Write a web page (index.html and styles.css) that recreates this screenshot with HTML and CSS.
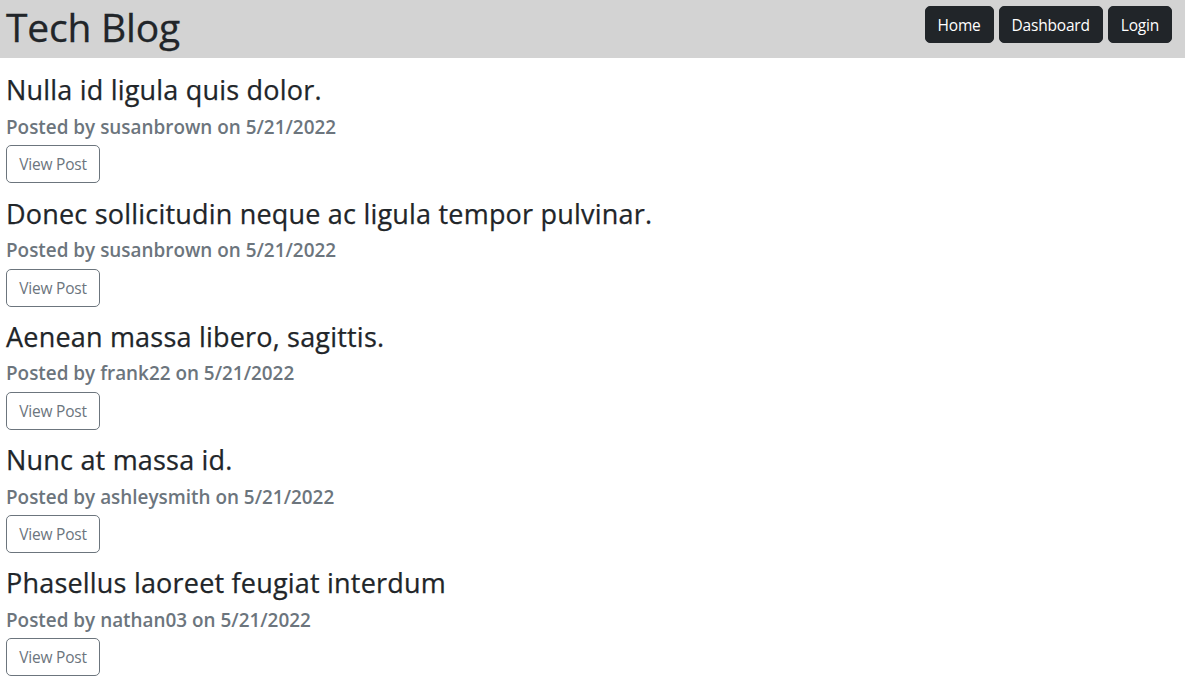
FILE: index.html
```html
<!DOCTYPE html>
<html lang="en">
<head>
<meta charset="utf-8">
<title>Tech Blog</title>
<link rel="stylesheet" href="styles.css">
</head>
<body>
<header class="topbar">
  <h1 class="brand">Tech Blog</h1>
  <nav class="nav">
    <a class="btn btn-dark" href="#">Home</a>
    <a class="btn btn-dark" href="#">Dashboard</a>
    <a class="btn btn-dark" href="#">Login</a>
  </nav>
</header>
<main class="posts">
  <article class="post">
    <h2 class="post-title">Nulla id ligula quis dolor.</h2>
    <h5 class="post-meta">Posted by susanbrown on 5/21/2022</h5>
    <a class="btn btn-outline" href="#">View Post</a>
  </article>
  <article class="post">
    <h2 class="post-title">Donec sollicitudin neque ac ligula tempor pulvinar.</h2>
    <h5 class="post-meta">Posted by susanbrown on 5/21/2022</h5>
    <a class="btn btn-outline" href="#">View Post</a>
  </article>
  <article class="post">
    <h2 class="post-title">Aenean massa libero, sagittis.</h2>
    <h5 class="post-meta">Posted by frank22 on 5/21/2022</h5>
    <a class="btn btn-outline" href="#">View Post</a>
  </article>
  <article class="post">
    <h2 class="post-title">Nunc at massa id.</h2>
    <h5 class="post-meta">Posted by ashleysmith on 5/21/2022</h5>
    <a class="btn btn-outline" href="#">View Post</a>
  </article>
  <article class="post">
    <h2 class="post-title">Phasellus laoreet feugiat interdum</h2>
    <h5 class="post-meta">Posted by nathan03 on 5/21/2022</h5>
    <a class="btn btn-outline" href="#">View Post</a>
  </article>
</main>
</body>
</html>
```
FILE: styles.css
```css
* { box-sizing: border-box; }
html, body { margin: 0; padding: 0; }
body {
  font-family: "Open Sans", "Noto Sans", sans-serif;
  color: #212529;
  background: #fff;
}
.topbar {
  background: #d3d3d3;
  height: 58px;
  display: flex;
  align-items: flex-start;
  justify-content: space-between;
  padding: 0 13px 0 6px;
}
.brand {
  margin: 0;
  font-size: 39px;
  font-weight: 400;
  line-height: 53px;
  letter-spacing: -0.2px;
  -webkit-text-stroke: 0.3px #212529;
}
.nav {
  display: flex;
  gap: 5px;
  padding-top: 6px;
}
.btn {
  display: inline-flex;
  align-items: center;
  justify-content: center;
  text-decoration: none;
  font-size: 15.5px;
  border-radius: 5px;
  height: 37px;
  padding: 0 12px;
  letter-spacing: -0.2px;
}
.btn-dark {
  background: #212529;
  color: #fff;
  border: 1px solid #212529;
}
.posts {
  padding: 2px 6px 0;
}
.post {
  padding-top: 14.25px;
}
.post-title {
  margin: 0;
  font-size: 27px;
  font-weight: 400;
  line-height: 32px;
  letter-spacing: 0.2px;
  -webkit-text-stroke: 0.25px #212529;
}
.post-meta {
  margin: 8.5px 0 0;
  font-size: 18.9px;
  font-weight: 600;
  line-height: 24px;
  color: #6c757d;
  letter-spacing: 0;
}
.btn-outline {
  margin-top: 6.5px;
  height: 38px;
  width: 94px;
  padding: 0;
  color: #6c757d;
  border: 1px solid #6c757d;
  background: #fff;
}
```
